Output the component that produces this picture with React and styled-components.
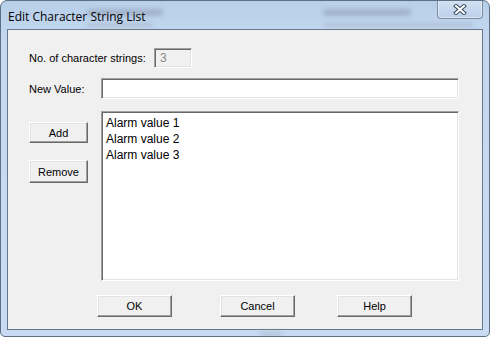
import React from 'react';
import styled, { createGlobalStyle } from 'styled-components';

const GlobalStyle = createGlobalStyle`
  html, body {
    margin: 0;
    padding: 0;
    background: #ffffff;
  }
  body {
    width: 490px;
    height: 337px;
    overflow: hidden;
  }
`;

const Window = styled.div`
  position: relative;
  box-sizing: border-box;
  width: 490px;
  height: 337px;
  border: 1px solid #5d6f85;
  border-radius: 7px 7px 5px 5px;
  background: linear-gradient(180deg, #b8cfea 0%, #c4d8f0 12%, #c8dbf2 100%);
  padding: 0 6px 6px 6px;
  display: flex;
  flex-direction: column;
  overflow: hidden;
`;

// blurred shapes of whatever lies behind the glass frame
const Smudge = styled.div`
  position: absolute;
  left: ${p => p.$x}px;
  top: ${p => p.$y}px;
  width: ${p => p.$w}px;
  height: ${p => p.$h}px;
  border-radius: 3px;
  background: ${p => p.$color || '#8d9db1'};
  filter: blur(2px);
  opacity: 0.55;
  pointer-events: none;
`;

const TitleBar = styled.div`
  position: relative;
  height: 28px;
  display: flex;
  align-items: center;
  justify-content: space-between;
  padding-left: 1px;
`;

const Title = styled.span`
  position: relative;
  font-family: 'Open Sans', 'Noto Sans', sans-serif;
  font-size: 12px;
  color: #000000;
  margin-top: 2px;
`;

const CloseButton = styled.div`
  position: relative;
  align-self: flex-start;
  margin-top: -1px;
  width: 46px;
  height: 19px;
  box-sizing: border-box;
  border: 1px solid #7d8ea2;
  border-top: none;
  border-radius: 0 0 4px 4px;
  background: linear-gradient(180deg, #d3e1f2 0%, #c7d8ee 50%, #bcd0ea 100%);
  box-shadow: inset 0 0 0 1px rgba(255, 255, 255, 0.45);
  display: flex;
  align-items: center;
  justify-content: center;
`;

const Client = styled.div`
  flex: 1;
  border: 1px solid #66778b;
  background: #f0f0f0;
  padding: 18px 23px 0 21px;
  display: flex;
  flex-direction: column;
  font-family: 'Liberation Sans', Tahoma, sans-serif;
  font-size: 11px;
  color: #000000;
`;

const Row = styled.div`
  display: flex;
  align-items: ${p => p.$align || 'center'};
  margin-top: ${p => p.$top || 0}px;
`;

const Label = styled.span`
  width: ${p => p.$width}px;
  flex: none;
  white-space: nowrap;
`;

const Sunken = styled.div`
  box-sizing: border-box;
  width: ${p => p.$width}px;
  height: ${p => p.$height}px;
  background: ${p => (p.$disabled ? '#f0f0f0' : '#ffffff')};
  border-top: 1px solid #a0a0a0;
  border-left: 1px solid #a0a0a0;
  border-right: 1px solid #ffffff;
  border-bottom: 1px solid #ffffff;
  box-shadow: inset 1px 1px 0 #696969, inset -1px -1px 0 #e3e3e3;
`;

const CountBox = styled(Sunken)`
  display: flex;
  align-items: center;
  padding-left: 5px;
  color: #8a8a8a;
  font-size: 12px;
`;

const ListBox = styled(Sunken)`
  padding: 3px 0 0 4px;
  font-family: 'Liberation Sans', Arial, sans-serif;
  font-size: 12px;
  line-height: 16px;
  color: #000000;
`;

const Item = styled.div`
  white-space: nowrap;
`;

const SideColumn = styled.div`
  width: 72px;
  flex: none;
  display: flex;
  flex-direction: column;
  padding-top: 11px;
  gap: 17px;
`;

const Button = styled.button`
  box-sizing: border-box;
  width: ${p => p.$width}px;
  height: ${p => p.$height}px;
  margin-left: ${p => p.$left || 0}px;
  padding: 0;
  background: #f0f0f0;
  border-top: 1px solid #ffffff;
  border-left: 1px solid #ffffff;
  border-right: 1px solid #696969;
  border-bottom: 1px solid #696969;
  box-shadow: inset -1px -1px 0 #a0a0a0, inset 1px 1px 0 #e3e3e3;
  font-family: 'Liberation Sans', Tahoma, sans-serif;
  font-size: 11px;
  color: #000000;
  cursor: default;
`;

const ButtonRow = styled.div`
  display: flex;
  margin-top: 14px;
  padding-left: 68px;
`;

export default function App() {
  return (
    <>
      <GlobalStyle />
      <Window>
        <Smudge $x={86} $y={8} $w={76} $h={7} />
        <Smudge $x={86} $y={22} $w={66} $h={4} $color="#a4b3c4" />
        <Smudge $x={322} $y={8} $w={88} $h={7} />
        <Smudge $x={322} $y={22} $w={150} $h={4} $color="#a4b3c4" />
        <Smudge $x={258} $y={331} $w={24} $h={4} $color="#9fb0c4" />
        <TitleBar>
          <Title>Edit Character String List</Title>
          <CloseButton>
            <svg width="14" height="11" viewBox="0 0 14 11">
              <path d="M3 2 L11 9 M11 2 L3 9" stroke="#3c4a5c" strokeWidth="4" strokeLinecap="square" fill="none" />
              <path d="M3 2 L11 9 M11 2 L3 9" stroke="#ffffff" strokeWidth="2" strokeLinecap="square" fill="none" />
            </svg>
          </CloseButton>
        </TitleBar>
        <Client>
          <Row>
            <Label $width={125}>No. of character strings:</Label>
            <CountBox $width={38} $height={20} $disabled>3</CountBox>
          </Row>
          <Row $top={10}>
            <Label $width={72}>New Value:</Label>
            <Sunken $width={358} $height={21} />
          </Row>
          <Row $top={12} $align="flex-start">
            <SideColumn>
              <Button $width={59} $height={21}>Add</Button>
              <Button $width={59} $height={23}>Remove</Button>
            </SideColumn>
            <ListBox $width={358} $height={170}>
              <Item>Alarm value 1</Item>
              <Item>Alarm value 2</Item>
              <Item>Alarm value 3</Item>
            </ListBox>
          </Row>
          <ButtonRow>
            <Button $width={75} $height={22}>OK</Button>
            <Button $width={75} $height={22} $left={48}>Cancel</Button>
            <Button $width={75} $height={22} $left={42}>Help</Button>
          </ButtonRow>
        </Client>
      </Window>
    </>
  );
}
